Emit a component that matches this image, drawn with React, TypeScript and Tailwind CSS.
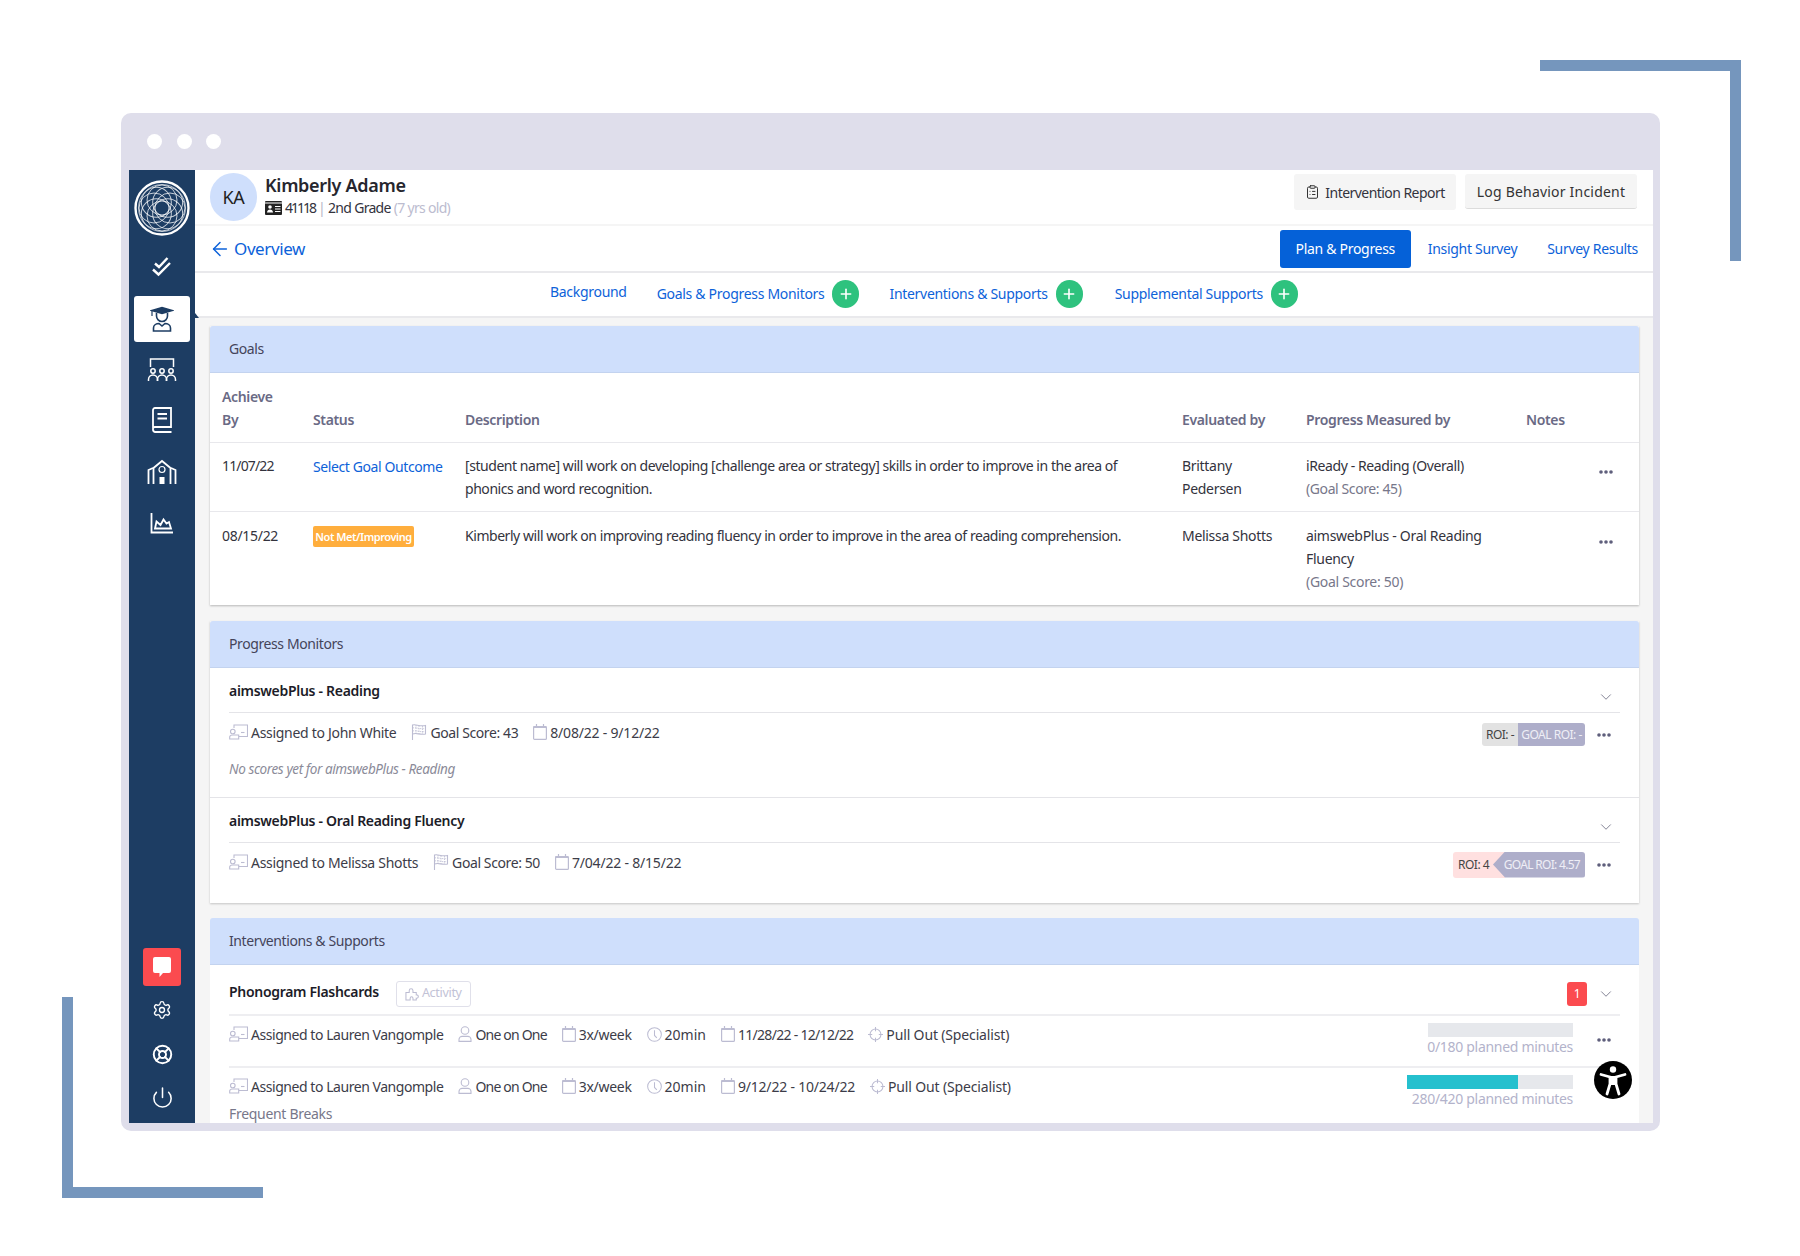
import type { ReactNode } from 'react'
import { ArrowLeft, ChevronDown, ClipboardList, LifeBuoy, Plus, Power, Settings } from 'lucide-react'

function Logo() {
  const angles = [0, 45, 90, 135, 180, 225, 270, 315]
  return (
    <svg viewBox="0 0 56 56" className="w-[56px] h-[56px]" fill="none" stroke="#fff">
      <circle cx="28" cy="28" r="26.5" strokeWidth="2.4" />
      <circle cx="28" cy="28" r="23.5" strokeWidth="0.9" opacity="0.7" />
      {angles.map((a) => (
        <circle key={a} cx="28" cy="20" r="15" strokeWidth="1" opacity="0.75" transform={`rotate(${a} 28 28)`} />
      ))}
    </svg>
  )
}

function Checks() {
  return (
    <svg viewBox="0 0 24 24" className="w-[24px] h-[24px]" fill="none" stroke="#fff" strokeWidth="2.4">
      <path d="M5 8.500l4 3.500 8.500-9" />
      <path d="M3 14.500l5.500 5L20 8" />
    </svg>
  )
}

function Student() {
  return (
    <svg viewBox="0 0 24 26" className="w-[24px] h-[26px]" fill="none" stroke="#1d3d63" strokeWidth="1.6">
      <path d="M2 4.500L12 1.500l10 3-10 3z" fill="#1d3d63" />
      <path d="M2 5v5" strokeWidth="1.200" />
      <path d="M6.500 7v3a5.500 5.500 0 0011 0V7" />
      <path d="M3.500 25v-3c0-3 3-4.500 5.500-4.500l3 2.500 3-2.500c2.500 0 5.500 1.500 5.500 4.500v3z" />
    </svg>
  )
}

function Classroom() {
  return (
    <svg viewBox="0 0 30 26" className="w-[30px] h-[26px]" fill="none" stroke="#fff" strokeWidth="1.500">
      <path d="M3.500 10V2h23v8" />
      <circle cx="6" cy="14" r="2.200" />
      <circle cx="15" cy="14" r="2.200" />
      <circle cx="24" cy="14" r="2.200" />
      <path d="M1.500 24v-1.500a4.500 4.500 0 019 0V24" />
      <path d="M10.500 24v-1.500a4.500 4.500 0 019 0V24" />
      <path d="M19.500 24v-1.500a4.500 4.500 0 019 0V24" />
    </svg>
  )
}

function Book() {
  return (
    <svg viewBox="0 0 22 26" className="w-[22px] h-[26px]" fill="none" stroke="#fff" strokeWidth="1.800">
      <path d="M2 21V3a2 2 0 012-2h16v19H4a2 2 0 00-2 2.500A2.500 2.500 0 004 25h16.500" />
      <path d="M6.500 7h9.500M6.500 11.500h9.500" />
    </svg>
  )
}

function School() {
  return (
    <svg viewBox="0 0 30 26" className="w-[30px] h-[26px]" fill="none" stroke="#fff" strokeWidth="1.800">
      <path d="M1.500 25V11l4.500-2 M28.500 25V11L24 9" />
      <path d="M6.500 25V9L15 2l8.500 7v16" />
      <circle cx="15" cy="10.500" r="3" strokeWidth="1.200" />
      <rect x="12.500" y="18" width="5" height="7" fill="#fff" stroke="none" />
    </svg>
  )
}

function Chart() {
  return (
    <svg viewBox="0 0 24 22" className="w-[24px] h-[22px]" fill="none" stroke="#fff" strokeWidth="1.800">
      <path d="M1.500 1v19.500H23" />
      <path d="M5 16.500l1.500-7 4 3.500 3-5.500 3 4 2.500-1.500 2 6.500z" />
    </svg>
  )
}

function Chat() {
  return (
    <svg viewBox="0 0 20 22" className="w-[20px] h-[22px]" fill="#fff">
      <path d="M3 1h14a2 2 0 012 2v12a2 2 0 01-2 2h-6l-3.500 4V17H3a2 2 0 01-2-2V3a2 2 0 012-2z" />
    </svg>
  )
}

function IdCard() {
  return (
    <svg viewBox="0 0 17 14" className="w-[17px] h-[14px] shrink-0">
      <rect width="17" height="14" rx="1" fill="#222" />
      <rect y="1.500" width="17" height="1" fill="#fff" />
      <circle cx="5" cy="6" r="1.800" fill="#fff" />
      <path d="M2 11.500c0-2 1.500-3 3-3s3 1 3 3z" fill="#fff" />
      <path d="M10 5.500h5.500M10 8h5.500M10 10.500h5.500" stroke="#fff" />
    </svg>
  )
}

function Teacher() {
  return (
    <svg viewBox="0 0 19 16" className="w-[19px] h-[16px] shrink-0" fill="none" stroke="#bcbcd2" strokeWidth="1.100">
      <path d="M5 4V1h13.500v11.500H10" />
      <path d="M12 8.500h3.500" />
      <circle cx="3.800" cy="7.500" r="2.300" />
      <path d="M.7 15v-2c0-1.500 1.300-2 3-2h6v4z" />
    </svg>
  )
}

function Flag() {
  return (
    <svg viewBox="0 0 16 16" className="w-[16px] h-[16px] shrink-0" fill="none" stroke="#bcbcd2" strokeWidth="1.100">
      <path d="M1.500 16V1c4-1 6 1.500 13 .5V10c-6 1-9-1.500-13 0" />
      <path d="M1.500 4c4-1 7 1.500 13 .5M1.500 7c4-1 7 1.500 13 .5M5 1v8.500M8 1.500v8.500M11.500 2v8" strokeWidth="0.800" strokeDasharray="1.500 1" />
    </svg>
  )
}

function Calendar() {
  return (
    <svg viewBox="0 0 14 16" className="w-[14px] h-[16px] shrink-0" fill="none" stroke="#bcbcd2" strokeWidth="1.200">
      <rect x="0.600" y="2.500" width="12.800" height="12.900" rx="1" />
      <path d="M0.600 3h12.800" strokeWidth="2" />
      <path d="M3.500 0v2M10.500 0v2" />
    </svg>
  )
}

function Person() {
  return (
    <svg viewBox="0 0 14 16" className="w-[14px] h-[16px] shrink-0" fill="none" stroke="#bcbcd2" strokeWidth="1.100">
      <circle cx="7" cy="4.500" r="3.800" />
      <path d="M1 15.400v-2c0-1.800 1.800-3 3-3h6c1.200 0 3 1.200 3 3v2z" />
    </svg>
  )
}

function Clock() {
  return (
    <svg viewBox="0 0 16 16" className="w-[15px] h-[15px] shrink-0" fill="none" stroke="#bcbcd2" strokeWidth="1.100">
      <circle cx="8" cy="8" r="7.300" />
      <path d="M8 3.500V9l2.500 2.500" />
    </svg>
  )
}

function Target() {
  return (
    <svg viewBox="0 0 16 16" className="w-[15px] h-[15px] shrink-0" fill="none" stroke="#bcbcd2" strokeWidth="1.100">
      <circle cx="8" cy="8" r="5.800" />
      <path d="M8 0v4.500M8 11.500V16M0 8h4.500M11.500 8H16" />
    </svg>
  )
}

function Puzzle() {
  return (
    <svg viewBox="0 0 16 16" className="w-[15px] h-[15px] shrink-0" fill="none" stroke="#bcbcd2" strokeWidth="1.100">
      <path d="M1 15V7h3.500V5a2 2 0 114 0v2H12v2.500a1.800 1.800 0 110 3.500v2H8.500v-2a1.500 1.500 0 10-3 0v2z" />
    </svg>
  )
}

function Dots() {
  return (
    <svg viewBox="0 0 14 4" className="w-[14px] h-[4px] shrink-0" fill="#5f5f7c">
      <circle cx="2" cy="2" r="1.800" />
      <circle cx="7" cy="2" r="1.800" />
      <circle cx="12" cy="2" r="1.800" />
    </svg>
  )
}

function AccessIcon() {
  return (
    <svg viewBox="0 0 38 38" className="w-[38px] h-[38px]">
      <circle cx="19" cy="19" r="19" fill="#000" />
      <circle cx="19" cy="8.500" r="3.200" fill="#fff" />
      <path d="M7 13.500l9 2.500v7l-3 10M31 13.500l-9 2.500v7l3 10" fill="none" stroke="#fff" strokeWidth="2.800" strokeLinecap="round" />
      <rect x="15.500" y="15" width="7" height="9" fill="#fff" />
    </svg>
  )
}

function Meta({ icon, tracking, children }: { icon: ReactNode; tracking?: string; children: ReactNode }) {
  return (
    <span className="flex items-center gap-[3px] whitespace-nowrap">
      {icon}
      <span className={tracking}>{children}</span>
    </span>
  )
}

function SectionHeader({ children }: { children: ReactNode }) {
  return (
    <div className="h-[47px] flex items-center pl-[19px] pb-[2px] rounded-t-[3px] bg-[#cfdffc] border-b border-[#c3d3ef] text-[14px] tracking-[-0.4px] text-[#44445a]">
      {children}
    </div>
  )
}

function AddTab({ label }: { label: string }) {
  return (
    <span className="flex items-center gap-[8px]">
      <span>{label}</span>
      <span className="w-[27px] h-[28px] rounded-full bg-[#2ec27e] flex items-center justify-center">
        <Plus className="w-[16px] h-[16px] text-white" strokeWidth={2.4} />
      </span>
    </span>
  )
}

const tableCols = 'grid grid-cols-[91px_152px_717px_124px_220px_1fr] pl-[12px]'

function Monitor({ title, children, note, border }: { title: string; children: ReactNode; note?: string; border?: boolean }) {
  return (
    <div className={`px-[19px] ${border ? 'border-b border-[#e4e4e8]' : 'pb-[17px]'}`}>
      <div className="h-[45px] pt-[13px] flex justify-between border-b border-[#e4e4e8] font-semibold text-[#1c1c28]">
        <span className="leading-[20px]">{title}</span>
        <ChevronDown className="w-[18px] h-[18px] mt-[7px] mr-[5px] text-[#77778a]" strokeWidth={1.200} />
      </div>
      <div className="h-[43px] pb-[5px] flex items-center justify-between text-[#3c3c48]">{children}</div>
      {note && <div className="h-[41px] pt-[3px] italic text-[#8b8b99] text-[13.500px] tracking-[-0.4px]">{note}</div>}
    </div>
  )
}

function InterventionRow({ date, dateTracking, bar, total, shift }: { date: string; dateTracking: string; bar: number; total: number; shift?: boolean }) {
  return (
    <div className="flex justify-between text-[#3c3c48]">
      <div className="flex items-center gap-[15px] h-[40px] pb-[4px]">
        <Meta icon={<Teacher />} tracking="tracking-[-0.45px]">Assigned to Lauren Vangomple</Meta>
        <Meta icon={<Person />} tracking="tracking-[-0.8px]">One on One</Meta>
        <Meta icon={<Calendar />} tracking="tracking-[-0.3px]">3x/week</Meta>
        <Meta icon={<Clock />} tracking="tracking-[0px]">20min</Meta>
        <Meta icon={<Calendar />} tracking={dateTracking}>{date}</Meta>
        <Meta icon={<Target />} tracking="tracking-[-0.15px]">Pull Out (Specialist)</Meta>
      </div>
      <div className={`flex ${shift ? 'mr-[47px]' : ''} items-start gap-[24px] pt-[7px]`}>
        <div className="flex flex-col items-end">
          <div className={`h-[14px] bg-[#e6e8ec] ${shift ? 'w-[166px]' : 'w-[145px]'}`}>
            <div className="h-full bg-[#25c0ce]" style={{ width: `${(bar / total) * 100}%` }} />
          </div>
          <div className="text-[#b3b3cb] leading-[20px] whitespace-nowrap">{bar}/{total} planned minutes</div>
        </div>
        {!shift && <span className="mt-[15px] mr-[9px]"><Dots /></span>}
      </div>
    </div>
  )
}

export default function App() {
  return (
    <div
      className="relative w-[1800px] h-[1256px] bg-white overflow-hidden pt-[113px] pl-[121px] text-[14px] tracking-[-0.3px] text-[#33333d]"
      style={{ fontFamily: '"Noto Sans", sans-serif' }}
    >
      {/* corner brackets */}
      <div className="absolute left-[1540px] top-[60px] w-[201px] h-[201px] border-t-[11px] border-r-[11px] border-[#7596bd]" />
      <div className="absolute left-[62px] top-[997px] w-[201px] h-[201px] border-b-[11px] border-l-[11px] border-[#7596bd]" />

      {/* browser window */}
      <div className="relative w-[1539px] h-[1018px] rounded-[10px] bg-[#dfdeeb] pl-[8px] pr-[7px] pb-[8px] flex flex-col">
        <div className="h-[57px] shrink-0 flex items-center gap-[14.500px] pl-[18px]">
          <span className="w-[15px] h-[15px] rounded-full bg-white" />
          <span className="w-[15px] h-[15px] rounded-full bg-white" />
          <span className="w-[15px] h-[15px] rounded-full bg-white" />
        </div>

        <div className="flex flex-1 min-h-0 overflow-hidden bg-white">
          {/* Sidebar */}
          <aside className="relative w-[66px] shrink-0 bg-[#1d3d63] flex flex-col items-center pt-[10px]">
            <Logo />
            <div className="mt-[19px] h-[24px] flex items-center"><Checks /></div>
            <div className="mt-[17px] w-[56px] h-[46px] rounded-[3px] bg-white flex items-center justify-center"><Student /></div>
            <div className="mt-[15px] h-[26px]"><Classroom /></div>
            <div className="mt-[24px] h-[26px]"><Book /></div>
            <div className="mt-[26px] h-[26px]"><School /></div>
            <div className="mt-[27px] h-[22px]"><Chart /></div>
            <div className="mt-auto w-[38px] h-[38px] rounded-[3px] bg-[#fb4b4f] flex items-center justify-center"><Chat /></div>
            <Settings className="mt-[14px] w-[20px] h-[20px] text-white" strokeWidth={1.6} />
            <LifeBuoy className="mt-[24px] w-[21px] h-[21px] text-white" strokeWidth={2.2} />
            <Power className="mt-[21px] mb-[14px] w-[23px] h-[23px] text-white" strokeWidth={1.6} />
            <span className="absolute right-[-4px] top-[143px] w-0 h-0 border-y-[5px] border-y-transparent border-l-[4px] border-l-[#1d3d63]" />
          </aside>

          <main className="flex-1 min-w-0 flex flex-col">
            {/* Student header */}
            <div className="h-[56px] shrink-0 flex justify-between pl-[15px] pr-[16px] border-b-2 border-[#f5f5f5]">
              <div className="flex items-center gap-[8px]">
                <div className="w-[47px] h-[48px] rounded-full bg-[#cfdffc] flex items-center justify-center text-[18px] text-[#222]">KA</div>
                <div className="-mt-[3px]">
                  <div className="text-[18px] font-semibold leading-[24px] text-[#26262e]">Kimberly Adame</div>
                  <div className="mt-[1px] flex items-center gap-[3px] leading-[20px] tracking-[-0.7px]">
                    <IdCard />
                    <span className="tracking-[-2px]">41118</span>
                    <span className="text-[#b5b5c5]">|</span>
                    <span>2nd Grade</span>
                    <span className="text-[#bcbccf]">(7 yrs old)</span>
                  </div>
                </div>
              </div>
              <div className="flex items-start gap-[9px] pt-[4px]">
                <div className="h-[36px] w-[162px] rounded-[3px] bg-[#f5f5f5] flex items-center justify-center gap-[5px] tracking-[-0.55px]">
                  <ClipboardList className="w-[15px] h-[16px] text-[#333]" strokeWidth={1.6} />
                  Intervention Report
                </div>
                <div className="h-[35px] w-[172px] rounded-[3px] bg-[#f5f5f5] border-b border-[#dcdcdc] flex items-center justify-center tracking-[0.2px] text-[#333]">
                  Log Behavior Incident
                </div>
              </div>
            </div>

            {/* Overview bar */}
            <div className="h-[47px] shrink-0 flex items-center justify-between pl-[14px] pr-[15px] border-b-2 border-[#e9e9ec]">
              <div className="flex items-center gap-[3px] text-[17px] tracking-[-0.4px] text-[#0d62d9]">
                <ArrowLeft className="w-[22px] h-[22px]" strokeWidth={1.6} />
                Overview
              </div>
              <div className="flex items-center text-[#0d62d9]">
                <span className="h-[38px] w-[131px] rounded-[3px] bg-[#0561d8] text-white flex items-center justify-center">Plan &amp; Progress</span>
                <span className="ml-[17px]">Insight Survey</span>
                <span className="ml-[30px]">Survey Results</span>
              </div>
            </div>

            {/* Section tabs */}
            <div className="h-[45px] shrink-0 flex items-center gap-[30px] pl-[355px] pb-[2px] border-b-2 border-[#e9e9ec] text-[#0d62d9] tracking-[-0.3px]">
              <span className="-mt-[4px]">Background</span>
              <AddTab label="Goals & Progress Monitors" />
              <AddTab label="Interventions & Supports" />
              <span className="ml-[2px]"><AddTab label="Supplemental Supports" /></span>
            </div>

            {/* Scroll area */}
            <div className="relative flex-1 min-h-0 overflow-hidden bg-[#f5f5f5] pl-[15px] pr-[14px] pt-[8px]">
              {/* Goals */}
              <section className="shadow-[0_1px_2px_rgba(0,0,0,0.25)]">
                <SectionHeader>Goals</SectionHeader>
                <div className="bg-white">
                  <div className={`${tableCols} h-[70px] items-end pb-[11px] border-b border-[#e8e8ec] font-semibold tracking-[-0.35px] text-[#6a6a85] leading-[23px]`}>
                    <span className="w-[60px]">Achieve By</span>
                    <span>Status</span>
                    <span>Description</span>
                    <span>Evaluated by</span>
                    <span>Progress Measured by</span>
                    <span>Notes</span>
                  </div>
                  <div className={`${tableCols} h-[69px] pt-[11px] border-b border-[#e8e8ec] leading-[23px]`}>
                    <span className="tracking-[-0.85px]">11/07/22</span>
                    <span className="text-[#0d62d9] pt-[1px] tracking-[-0.4px]">Select Goal Outcome</span>
                    <span className="pr-[40px] tracking-[-0.45px]">[student name] will work on developing [challenge area or strategy] skills in order to improve in the area of phonics and word recognition.</span>
                    <span className="pr-[30px]">Brittany Pedersen</span>
                    <span className="tracking-[-0.4px]">iReady - Reading (Overall)<br /><span className="text-[#77778a]">(Goal Score: 45)</span></span>
                    <span className="flex justify-end pr-[26px] pt-[16px]"><Dots /></span>
                  </div>
                  <div className={`${tableCols} h-[93px] pt-[12px] leading-[23px]`}>
                    <span>08/15/22</span>
                    <span><span className="inline-flex items-center h-[21px] w-[101px] justify-center whitespace-nowrap rounded-[2px] bg-[#ffae3d] text-white text-[11px] tracking-[-0.45px] font-semibold">Not Met/Improving</span></span>
                    <span className="pr-[40px] tracking-[-0.45px]">Kimberly will work on improving reading fluency in order to improve in the area of reading comprehension.</span>
                    <span className="whitespace-nowrap">Melissa Shotts</span>
                    <span className="pr-[30px]">aimswebPlus - Oral Reading Fluency<br /><span className="text-[#77778a]">(Goal Score: 50)</span></span>
                    <span className="flex justify-end pr-[26px] pt-[16px]"><Dots /></span>
                  </div>
                </div>
              </section>

              {/* Progress Monitors */}
              <section className="mt-[16px] shadow-[0_1px_2px_rgba(0,0,0,0.2)]">
                <SectionHeader>Progress Monitors</SectionHeader>
                <div className="bg-white">
                  <Monitor
                    title="aimswebPlus - Reading"
                    border
                    note="No scores yet for aimswebPlus - Reading"
                  >
                    <div className="flex items-center gap-[15px]">
                      <Meta icon={<Teacher />}>Assigned to John White</Meta>
                      <Meta icon={<Flag />} tracking="tracking-[-0.4px]">Goal Score: 43</Meta>
                      <Meta icon={<Calendar />} tracking="tracking-[-0.2px]">8/08/22 - 9/12/22</Meta>
                    </div>
                    <div className="flex items-center pt-[5px]">
                      <span className="h-[23px] w-[36px] rounded-l-[3px] bg-[#e2e2e2] flex items-center justify-center text-[12px] tracking-[-0.5px] text-[#444]">ROI: -</span>
                      <span className="h-[23px] w-[67px] rounded-r-[3px] bg-[#aeaeca] flex items-center justify-center text-[12px] tracking-[-0.5px] text-[#eeeef6]">GOAL ROI: -</span>
                      <span className="ml-[12px] mr-[9px]"><Dots /></span>
                    </div>
                  </Monitor>
                  <Monitor title="aimswebPlus - Oral Reading Fluency">
                    <div className="flex items-center gap-[15px]">
                      <Meta icon={<Teacher />}>Assigned to Melissa Shotts</Meta>
                      <Meta icon={<Flag />} tracking="tracking-[-0.4px]">Goal Score: 50</Meta>
                      <Meta icon={<Calendar />} tracking="tracking-[-0.2px]">7/04/22 - 8/15/22</Meta>
                    </div>
                    <div className="flex items-center pt-[5px]">
                      <span className="h-[26px] w-[52px] -mr-[12px] rounded-l-[3px] bg-[#ffe0e0] flex items-center pl-[5px] text-[12px] tracking-[-0.5px] text-[#444]">ROI: 4</span>
                      <span className="relative h-[26px] w-[92px] [clip-path:polygon(0_50%,12px_0,100%_0,100%_100%,12px_100%)] rounded-r-[3px] bg-[#aeaeca] flex items-center justify-end pr-[5px] text-[12px] tracking-[-0.7px] text-[#eeeef6]">GOAL ROI: 4.57</span>
                      <span className="ml-[12px] mr-[9px]"><Dots /></span>
                    </div>
                  </Monitor>
                </div>
              </section>

              {/* Interventions */}
              <section className="mt-[15px]">
                <SectionHeader>Interventions &amp; Supports</SectionHeader>
                <div className="bg-white px-[19px] h-[300px]">
                  <div className="h-[51px] flex items-center justify-between border-b-2 border-[#eeeef1] pt-[6px]">
                    <div className="flex items-center gap-[17px]">
                      <span className="font-semibold text-[#1c1c28] -mt-[2px]">Phonogram Flashcards</span>
                      <span className="mt-[2px] h-[26px] w-[75px] rounded-[3px] border border-[#e0e0ea] flex items-center justify-center gap-[2px] text-[12.500px] text-[#c2c2d6]">
                        <Puzzle />Activity
                      </span>
                    </div>
                    <div className="mt-[2px] flex items-center gap-[10px]">
                      <span className="h-[24px] w-[20px] rounded-[3px] bg-[#fb4b4f] text-white text-[12px] flex items-center justify-center">1</span>
                      <ChevronDown className="w-[18px] h-[18px] mr-[5px] text-[#77778a]" strokeWidth={1.200} />
                    </div>
                  </div>
                  <div className="h-[52px] border-b-2 border-[#eeeef1]">
                    <InterventionRow date="11/28/22 - 12/12/22" dateTracking="tracking-[-0.7px]" bar={0} total={180} />
                  </div>
                  <InterventionRow date="9/12/22 - 10/24/22" dateTracking="tracking-[-0.2px]" bar={280} total={420} shift />
                  <div className="-mt-[5px] text-[#77778a] leading-[20px]">Frequent Breaks</div>
                </div>
              </section>

              {/* accessibility widget */}
              <div className="absolute left-[1399px] top-[743px]"><AccessIcon /></div>
            </div>
          </main>
        </div>
      </div>
    </div>
  )
}
